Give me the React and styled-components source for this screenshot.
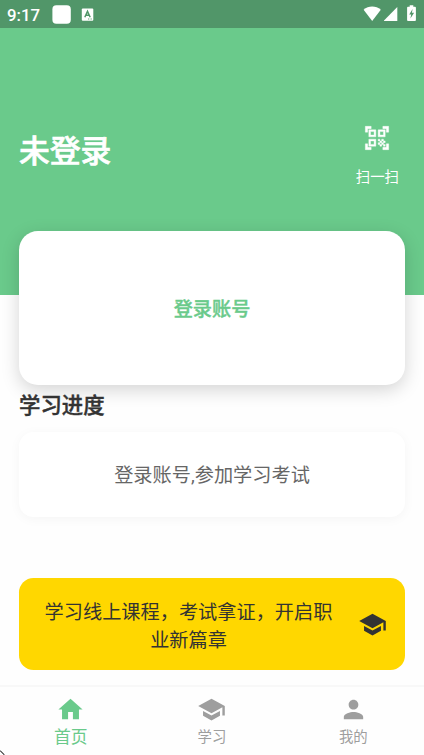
import React from 'react';
import styled, {createGlobalStyle} from 'styled-components';
import {MdHome, MdPerson, MdQrCodeScanner, MdSchool} from 'react-icons/md';

const GlobalStyle = createGlobalStyle`
  :root {
    --green: #6aca8b;
    --green-dark: #519669;
    --yellow: #ffd700;
    --dark: #333333;
    --grey: #9e9e9e;
  }

  body {
    margin: 0;
    background: #fefefe;
    font-family: Roboto, "Noto Sans CJK SC", sans-serif;
  }
`

const Main = styled.div`
  position: relative;
  display: flex;
  flex-direction: column;
  width: 424px;
  height: 755px;
  overflow: hidden;
  background: #fefefe;
`

const StatusBar = styled.div`
  display: flex;
  justify-content: space-between;
  height: 28px;
  box-sizing: border-box;
  padding: 0 5px 0 7px;
  color: white;
  background: var(--green-dark);
`

const StatusGroup = styled.div`
  display: flex;
  align-items: center;
`

const Time = styled.span`
  width: 45px;
  font-size: 16.8px;
  font-weight: 500;
  line-height: 28px;
  padding-top: 1px;
`

const Header = styled.header`
  height: 267px;
  flex-shrink: 0;
  box-sizing: border-box;
  padding: 96px 25px 0 19px;
  display: flex;
  justify-content: space-between;
  align-items: flex-start;
  color: white;
  background: var(--green);
`

const UserName = styled.h1`
  margin: 5px 0 0;
  font-size: 30.8px;
  font-weight: 500;
  line-height: 46px;
  -webkit-text-stroke: 0.7px currentColor;
`

const Scan = styled.div`
  display: flex;
  flex-direction: column;
  align-items: center;
  gap: 15px;
  font-size: 14.4px;
  line-height: 22px;

  svg path:first-child {
    stroke: none;
  }

  svg path:last-child {
    stroke: white;
    stroke-width: 0.35px;
  }
`

const LoginCard = styled.section`
  position: relative;
  flex-shrink: 0;
  display: flex;
  align-items: center;
  justify-content: center;
  height: 153.5px;
  margin: -64px 19px 0;
  border-radius: 19px;
  background: white;
  color: var(--green);
  font-size: 19.2px;
  font-weight: 500;
  -webkit-text-stroke: 0.4px currentColor;
  box-shadow: 0 5px 18px rgba(0, 0, 0, 0.17);
`

const SectionTitle = styled.h2`
  position: relative;
  margin: 5.5px 19px 10px;
  font-size: 21.4px;
  font-weight: 500;
  line-height: 32px;
  color: var(--dark);
  -webkit-text-stroke: 0.4px currentColor;
`

const ProgressCard = styled.section`
  flex-shrink: 0;
  display: flex;
  align-items: center;
  justify-content: center;
  height: 85px;
  box-sizing: border-box;
  margin: 0 19px;
  padding-bottom: 2px;
  border-radius: 14.5px;
  background: white;
  color: #666666;
  font-size: 19.2px;
  box-shadow: 0 2px 12px rgba(0, 0, 0, 0.04);
`

const Banner = styled.section`
  flex-shrink: 0;
  display: flex;
  align-items: center;
  justify-content: space-between;
  height: 92px;
  box-sizing: border-box;
  margin: 61px 19px 0;
  padding: 0 18px 0 25px;
  border-radius: 14.5px;
  color: var(--dark);
  background: var(--yellow);
`

const BannerText = styled.p`
  width: 289px;
  margin: 0;
  padding-top: 5px;
  font-size: 19.2px;
  line-height: 28px;
  text-align: center;
`

const TabBar = styled.nav`
  display: grid;
  grid-template-columns: repeat(3, 1fr);
  flex: 1;
  margin-top: 15px;
  border-top: 2px solid #f8f8f8;
  background: #fefefe;
`

const Tab = styled.div`
  display: flex;
  flex-direction: column;
  align-items: center;
  padding-top: 8px;
  color: ${({active}) => active ? 'var(--green)' : 'var(--grey)'};
  font-size: ${({active}) => active ? '16.8px' : '14.4px'};

  span {
    line-height: ${({active}) => active ? '27px' : '28px'};
  }
`

const Pointer = styled.svg`
  position: absolute;
  left: 0;
  bottom: 0;
`

const StatusIcons = () => {
    return (
        <svg width="56" height="28" viewBox="0 0 56 28" fill="white">
            <path d="M9.2 21 0.6 9.7C5.4 5.3 13 5.3 17.8 9.7Z"/>
            <path d="M21 21V20.5L34.3 7V21Z"/>
            <path d="M45 6.8h1.7V5.2h3.6v1.6H52a.9.9 0 0 1 .9.9v12.4a.9.9 0 0 1-.9.9h-7a.9.9 0 0 1-.9-.9V7.7a.9.9 0 0 1 .9-.9Z"/>
            <path d="M49.6 9 46.2 14.4h2L47.4 18.5l3.7-5.7h-2.2Z" fill="#519669"/>
        </svg>
    )
}

const NoticeIcons = () => {
    return (
        <svg width="44" height="28" viewBox="0 0 44 28">
            <rect x="0.4" y="5.3" width="18.4" height="18.4" rx="4" fill="white"/>
            <rect x="29.8" y="8.4" width="11.5" height="12.4" rx="1" fill="white"/>
            <path d="M32.8 17.3 35.5 11.4 38.2 17.3M33.7 15.3h3.6" fill="none" stroke="#519669" strokeWidth="1.5"/>
            <path d="M36 19h1.3M38.5 19h1.3" stroke="#519669" strokeWidth="0.9"/>
        </svg>
    )
}

const App = () => {
    return (
        <>
            <GlobalStyle/>
            <Main>
                <StatusBar>
                    <StatusGroup>
                        <Time>9:17</Time>
                        <NoticeIcons/>
                    </StatusGroup>
                    <StatusGroup>
                        <StatusIcons/>
                    </StatusGroup>
                </StatusBar>
                <Header>
                    <UserName>未登录</UserName>
                    <Scan>
                        <MdQrCodeScanner size={28}/>
                        <span>扫一扫</span>
                    </Scan>
                </Header>
                <LoginCard>登录账号</LoginCard>
                <SectionTitle>学习进度</SectionTitle>
                <ProgressCard>登录账号,参加学习考试</ProgressCard>
                <Banner>
                    <BannerText>学习线上课程，考试拿证，开启职业新篇章</BannerText>
                    <MdSchool size={29}/>
                </Banner>
                <TabBar>
                    {
                        TABS.map(({label, Icon, active}) => (
                            <Tab key={label} active={active}>
                                <Icon size={29}/>
                                <span>{label}</span>
                            </Tab>
                        ))
                    }
                </TabBar>
                <Pointer width="5" height="5" viewBox="0 0 5 5">
                    <path d="M0 1 4 5H0Z" fill="white"/>
                    <path d="M0 1h1v1h1v1h1v1h1v1" fill="none" stroke="#222222" strokeWidth="0.8"/>
                </Pointer>
            </Main>
        </>
    );
};

const TABS = [
    {
        label: '首页',
        Icon: MdHome,
        active: true
    },
    {
        label: '学习',
        Icon: MdSchool
    },
    {
        label: '我的',
        Icon: MdPerson
    },
]

export default App;
